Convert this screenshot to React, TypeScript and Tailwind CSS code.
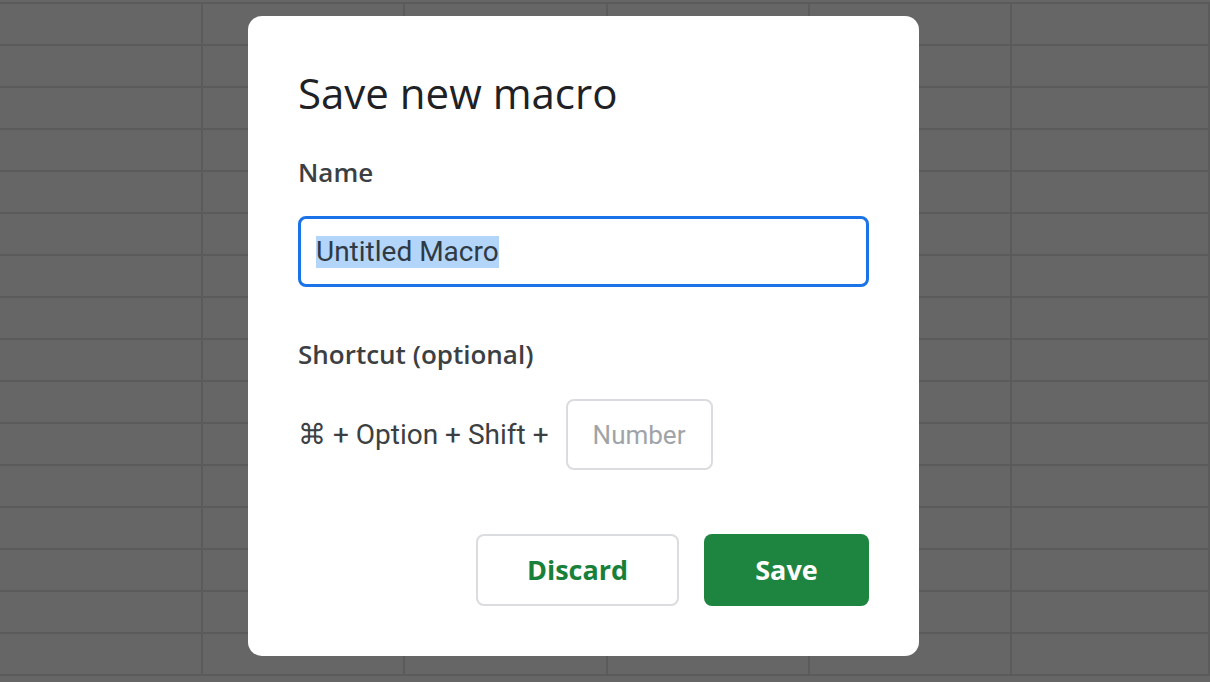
import React from "react";

const cols = [203, 202, 203, 202, 202, 198];
const rows = Array.from({ length: 16 });

function SheetBackdrop() {
  return (
    <div className="flex h-[682px] w-[1210px] flex-col overflow-hidden bg-[#666666]">
      <div className="h-[4px] shrink-0 border-b-2 border-[#5b5b5b]" />
      {rows.map((_, r) => (
        <div key={r} className="flex h-[42px] shrink-0 border-b-2 border-[#5b5b5b]">
          {cols.map((w, c) => (
            <div key={c} style={{ width: w }} className="h-full shrink-0 border-r-2 border-[#5b5b5b]" />
          ))}
        </div>
      ))}
    </div>
  );
}

export default function App() {
  return (
    <div className="relative h-[682px] w-[1210px] overflow-hidden font-['Open_Sans',sans-serif]">
      <SheetBackdrop />
      <div className="absolute left-[248px] top-[16px] flex h-[640px] w-[671px] flex-col rounded-[14px] bg-white px-[50px]">
        <h1 className="mt-[55px] text-[42px] leading-[44px] font-normal text-[#202124]">Save new macro</h1>
        <label className="mt-[41px] text-[26px] leading-[32px] font-semibold text-[#3c4043]">Name</label>
        <div className="mt-[28px] flex h-[71px] w-[571px] items-center rounded-[8px] border-[3px] border-[#1a73e8] px-[15px]">
          <span className="bg-[#b4d5fa] font-['Roboto',sans-serif] text-[28px] leading-[32px] text-[#2f3a44]">Untitled Macro</span>
        </div>
        <label className="mt-[51px] text-[26px] leading-[32px] font-semibold text-[#3c4043]">Shortcut (optional)</label>
        <div className="mt-[29px] flex items-center gap-[17px]">
          <span className="font-['Roboto',sans-serif] text-[28px] leading-[32px] text-[#3c4043]">⌘ + Option + Shift +</span>
          <div className="flex h-[71px] w-[147px] items-center justify-center rounded-[8px] border-2 border-[#dadce0]">
            <span className="font-['Roboto',sans-serif] text-[26px] leading-[32px] text-[#a0a4a8]">Number</span>
          </div>
        </div>
        <div className="mt-[64px] flex justify-end gap-[25px]">
          <button className="flex h-[72px] w-[203px] items-center justify-center rounded-[8px] border-2 border-[#dadce0] bg-white text-[27px] font-bold text-[#188038]">
            Discard
          </button>
          <button className="flex h-[72px] w-[165px] items-center justify-center rounded-[8px] bg-[#1e8540] text-[27px] font-bold text-white">
            Save
          </button>
        </div>
      </div>
    </div>
  );
}
